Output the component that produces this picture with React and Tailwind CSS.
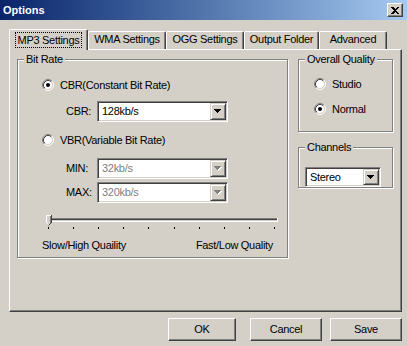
import React from 'react';

// classic 3D edges
const raised =
  'border border-t-white border-l-white border-r-[#404040] border-b-[#404040] shadow-[inset_-1px_-1px_0_#808080]';
const sunken =
  'border border-t-[#808080] border-l-[#808080] border-r-white border-b-white shadow-[inset_1px_1px_0_#404040,inset_-1px_-1px_0_#d4d0c8]';
const etched = 'relative border border-[#808080] shadow-[inset_1px_1px_0_#fff,1px_1px_0_#fff]';

const Radio = ({ checked }) => (
  <svg width="12" height="12" viewBox="0 0 12 12" className="shrink-0">
    <circle cx="6" cy="6" r="4.5" fill="#fff" />
    <path d="M2.11 9.89A5.5 5.5 0 0 1 9.89 2.11" fill="none" stroke="#808080" />
    <path d="M9.89 2.11A5.5 5.5 0 0 1 2.11 9.89" fill="none" stroke="#fff" />
    <path d="M2.82 9.18A4.5 4.5 0 0 1 9.18 2.82" fill="none" stroke="#404040" />
    <path d="M9.18 2.82A4.5 4.5 0 0 1 2.82 9.18" fill="none" stroke="#d4d0c8" />
    {checked && <circle cx="6" cy="6" r="2" fill="#000" />}
  </svg>
);

const Arrow = ({ disabled }) => (
  <svg width="8" height="5" viewBox="0 0 8 5" shapeRendering="crispEdges">
    {disabled && (
      <g fill="#fff">
        <rect x="1" y="1" width="7" height="1" />
        <rect x="2" y="2" width="5" height="1" />
        <rect x="3" y="3" width="3" height="1" />
        <rect x="4" y="4" width="1" height="1" />
      </g>
    )}
    <g fill={disabled ? '#808080' : '#000'}>
      <rect x="0" y="0" width="7" height="1" />
      <rect x="1" y="1" width="5" height="1" />
      <rect x="2" y="2" width="3" height="1" />
      <rect x="3" y="3" width="1" height="1" />
    </g>
  </svg>
);

const Combo = ({ value, size, disabled }) => (
  <div className={`flex items-stretch bg-white p-px ${sunken} ${size}`}>
    <div className={`flex-1 flex items-center pl-[3px] ${disabled ? 'text-[#808080]' : 'text-black'}`}>{value}</div>
    <div className="w-[16px] flex items-center justify-center bg-[#d4d0c8] border border-t-[#d4d0c8] border-l-[#d4d0c8] border-r-[#404040] border-b-[#404040] shadow-[inset_1px_1px_0_#fff,inset_-1px_-1px_0_#808080]">
      <Arrow disabled={disabled} />
    </div>
  </div>
);

const Legend = ({ children }) => (
  <span className="absolute left-[6px] top-[-7px] px-[2px] bg-[#d4d0c8] leading-[13px]">{children}</span>
);

const Slider = () => {
  const ticks = Array.from({ length: 10 }, (_, i) => Math.round(4 + i * 25.1));
  return (
    <svg width="240" height="22" viewBox="0 0 240 22" shapeRendering="crispEdges" className="ml-[26px] mt-[9px]">
      <rect x="3" y="6" width="231" height="1" fill="#808080" />
      <rect x="3" y="7" width="231" height="1" fill="#404040" />
      <rect x="3" y="8" width="231" height="1" fill="#d4d0c8" />
      <rect x="3" y="9" width="231" height="1" fill="#fff" />
      <rect x="3" y="6" width="1" height="4" fill="#808080" />
      <rect x="233" y="6" width="1" height="4" fill="#fff" />
      {/* thumb */}
      <polygon points="2,3 7,3 7,10 4.5,13 2,10" fill="#d4d0c8" shapeRendering="auto" />
      <rect x="2" y="3" width="5" height="1" fill="#fff" />
      <rect x="2" y="3" width="1" height="8" fill="#fff" />
      <rect x="7" y="3" width="1" height="8" fill="#404040" />
      <rect x="6" y="4" width="1" height="7" fill="#808080" />
      <path d="M7.5 10.5L4.5 13.5" stroke="#404040" shapeRendering="auto" />
      <path d="M2.5 10.5L4.5 12.5" stroke="#fff" shapeRendering="auto" />
      {ticks.map((x) => (
        <rect key={x} x={x} y="15" width="1" height="2" fill="#000" />
      ))}
    </svg>
  );
};

const Tab = ({ label, size }) => (
  <div className={`h-[18px] flex justify-center pt-px border-t border-l border-r border-t-white border-l-white border-r-[#404040] shadow-[inset_-1px_0_0_#808080] rounded-t-[2px] ${size}`}>
    {label}
  </div>
);

export default function App() {
  return (
    <div className="w-[407px] h-[346px] bg-[#d4d0c8] overflow-hidden flex flex-col font-['Liberation_Sans',Arial,sans-serif] text-[11px] leading-[13px] tracking-[-0.3px] text-black">
      {/* title bar */}
      <div className="h-[20px] shrink-0 flex items-center justify-between pl-[3px] pr-[4px] bg-linear-to-r from-[#0a246a] to-[#a6caf0]">
        <span className="text-white font-bold tracking-normal">Options</span>
        <div className={`w-[16px] h-[14px] bg-[#d4d0c8] flex items-center justify-center ${raised}`}>
          <svg width="8" height="7" viewBox="0 0 8 7" shapeRendering="crispEdges">
            <path d="M0 0h2l2 2 2-2h2L5 3.5 8 7H6L4 5 2 7H0l3-3.5z" fill="#000" />
          </svg>
        </div>
      </div>

      <div className="pl-[9px] pr-[5px] pt-[9px]">
        {/* tabs */}
        <div className="flex items-end h-[20px]">
          <div className="relative z-10 -mb-px h-[21px] w-[79px] flex justify-center pt-[2px] bg-[#d4d0c8] border-t border-l border-r border-t-white border-l-white border-r-[#404040] shadow-[inset_-1px_0_0_#808080] rounded-t-[2px]">
            <span className="h-[16px] px-[2px] flex items-center border border-dotted border-black">MP3 Settings</span>
          </div>
          <Tab label="WMA Settings" size="w-[78px]" />
          <Tab label="OGG Settings" size="w-[78px]" />
          <Tab label="Output Folder" size="w-[75px]" />
          <Tab label="Advanced" size="w-[68px]" />
        </div>

        {/* panel */}
        <div className="h-[263px] flex items-start pl-[7px] pt-[9px] border border-t-white border-l-white border-r-[#404040] border-b-[#404040] shadow-[inset_-1px_-1px_0_#808080]">
          <div className={`${etched} w-[271px] h-[199px] flex flex-col`}>
            <Legend>Bit Rate</Legend>
            <div className="mt-[19px] h-[12px] flex items-center gap-[6px] pl-[24px]">
              <Radio checked />
              <span>CBR(Constant Bit Rate)</span>
            </div>
            <div className="mt-[10px] flex items-center pl-[48px]">
              <span className="w-[31px]">CBR:</span>
              <Combo value="128kb/s" size="w-[131px] h-[21px]" />
            </div>
            <div className="mt-[12px] h-[12px] flex items-center gap-[6px] pl-[24px]">
              <Radio />
              <span>VBR(Variable Bit Rate)</span>
            </div>
            <div className="mt-[12px] flex items-center pl-[48px]">
              <span className="w-[31px]">MIN:</span>
              <Combo value="32kb/s" size="w-[131px] h-[21px]" disabled />
            </div>
            <div className="mt-[3px] flex items-center pl-[48px]">
              <span className="w-[31px]">MAX:</span>
              <Combo value="320kb/s" size="w-[131px] h-[21px]" disabled />
            </div>
            <Slider />
            <div className="mt-[5px] flex justify-between pl-[24px] pr-[14px]">
              <span>Slow/High Quaility</span>
              <span>Fast/Low Quality</span>
            </div>
          </div>

          <div className="ml-[10px] flex flex-col">
            <div className={`${etched} w-[95px] h-[73px] flex flex-col`}>
              <Legend>Overall Quality</Legend>
              <div className="mt-[18px] h-[12px] flex items-center gap-[6px] pl-[15px]">
                <Radio />
                <span>Studio</span>
              </div>
              <div className="mt-[13px] h-[12px] flex items-center gap-[6px] pl-[15px]">
                <Radio checked />
                <span>Normal</span>
              </div>
            </div>
            <div className={`${etched} mt-[15px] w-[95px] h-[41px] flex flex-col`}>
              <Legend>Channels</Legend>
              <div className="mt-[19px] pl-[6px]">
                <Combo value="Stereo" size="w-[76px] h-[20px]" />
              </div>
            </div>
          </div>
        </div>
      </div>

      {/* dialog buttons */}
      <div className="mt-[6px] flex justify-end pr-[5px]">
        <button className={`w-[68px] h-[23px] bg-[#d4d0c8] ${raised}`}>OK</button>
        <button className={`ml-[14px] w-[72px] h-[23px] bg-[#d4d0c8] ${raised}`}>Cancel</button>
        <button className={`ml-[8px] w-[72px] h-[23px] bg-[#d4d0c8] ${raised}`}>Save</button>
      </div>
    </div>
  );
}
